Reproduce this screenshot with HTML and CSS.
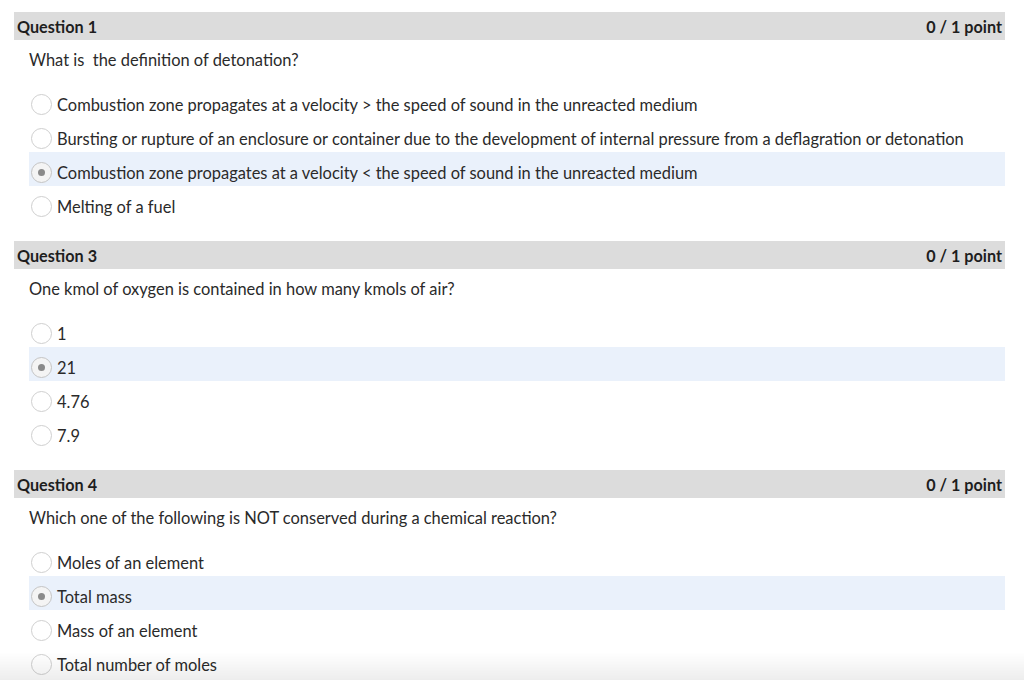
FILE: index.html
```html
<!DOCTYPE html>
<html>
<head>
<meta charset="utf-8">
<link rel="stylesheet" href="styles.css">
</head>
<body>
<div class="page">
  <section class="question">
    <div class="q-head"><span>Question 1</span><span>0 / 1 point</span></div>
    <div class="q-text">What is &nbsp;the definition of detonation?</div>
    <div class="options">
      <div class="opt"><span class="radio"></span><span>Combustion zone propagates at a velocity &gt; the speed of sound in the unreacted medium</span></div>
      <div class="opt"><span class="radio"></span><span>Bursting or rupture of an enclosure or container due to the development of internal pressure from a deflagration or detonation</span></div>
      <div class="opt selected"><span class="radio"></span><span>Combustion zone propagates at a velocity &lt; the speed of sound in the unreacted medium</span></div>
      <div class="opt"><span class="radio"></span><span>Melting of a fuel</span></div>
    </div>
  </section>
  <section class="question">
    <div class="q-head"><span>Question 3</span><span>0 / 1 point</span></div>
    <div class="q-text">One kmol of oxygen is contained in how many kmols of air?</div>
    <div class="options">
      <div class="opt"><span class="radio"></span><span>1</span></div>
      <div class="opt selected"><span class="radio"></span><span>21</span></div>
      <div class="opt"><span class="radio"></span><span>4.76</span></div>
      <div class="opt"><span class="radio"></span><span>7.9</span></div>
    </div>
  </section>
  <section class="question">
    <div class="q-head"><span>Question 4</span><span>0 / 1 point</span></div>
    <div class="q-text">Which one of the following is NOT conserved during a chemical reaction?</div>
    <div class="options">
      <div class="opt"><span class="radio"></span><span>Moles of an element</span></div>
      <div class="opt selected"><span class="radio"></span><span>Total mass</span></div>
      <div class="opt"><span class="radio"></span><span>Mass of an element</span></div>
      <div class="opt"><span class="radio"></span><span>Total number of moles</span></div>
    </div>
  </section>
</div>
<div class="fade"></div>
</body>
</html>
```

FILE: styles.css
```css
html, body {
  margin: 0;
  padding: 0;
  background: #ffffff;
  overflow: hidden;
}
body {
  font-family: Lato, "Open Sans", sans-serif;
  font-size: 16.45px;
  color: #2a2a2a;
}
.page {
  width: 991px;
  padding: 12px 0 0 14px;
}
.question {
  margin-bottom: 21px;
}
.q-head {
  display: flex;
  justify-content: space-between;
  align-items: center;
  height: 28px;
  padding: 0 3px;
  background: #dcdcdc;
  font-weight: 700;
  font-size: 16.2px;
  color: #1e1e1e;
}
.q-text {
  padding: 10px 0 0 15px;
  line-height: 20px;
  height: 20px;
  margin-bottom: 14px;
}
.options {
  display: flex;
  flex-direction: column;
  margin-left: 15px;
}
.opt {
  display: flex;
  align-items: center;
  height: 34px;
  box-sizing: border-box;
  padding: 7px 0 0 2px;
  gap: 5px;
}
.opt.selected {
  background: #eaf1fb;
}
.radio {
  width: 21px;
  height: 21px;
  border: 1px solid #cfcfcf;
  border-radius: 50%;
  background: #ffffff;
  box-sizing: border-box;
  display: flex;
  align-items: center;
  justify-content: center;
  flex: none;
}
.opt.selected .radio {
  background: #f4f4f4;
  border-color: #c4c4c4;
}
.opt.selected .radio::after {
  content: "";
  width: 7px;
  height: 7px;
  border-radius: 50%;
  background: #8a8a8a;
}
.fade {
  position: fixed;
  left: 0;
  right: 0;
  bottom: 0;
  height: 28px;
  background: linear-gradient(rgba(0,0,0,0), rgba(0,0,0,0.07));
  pointer-events: none;
}
```
